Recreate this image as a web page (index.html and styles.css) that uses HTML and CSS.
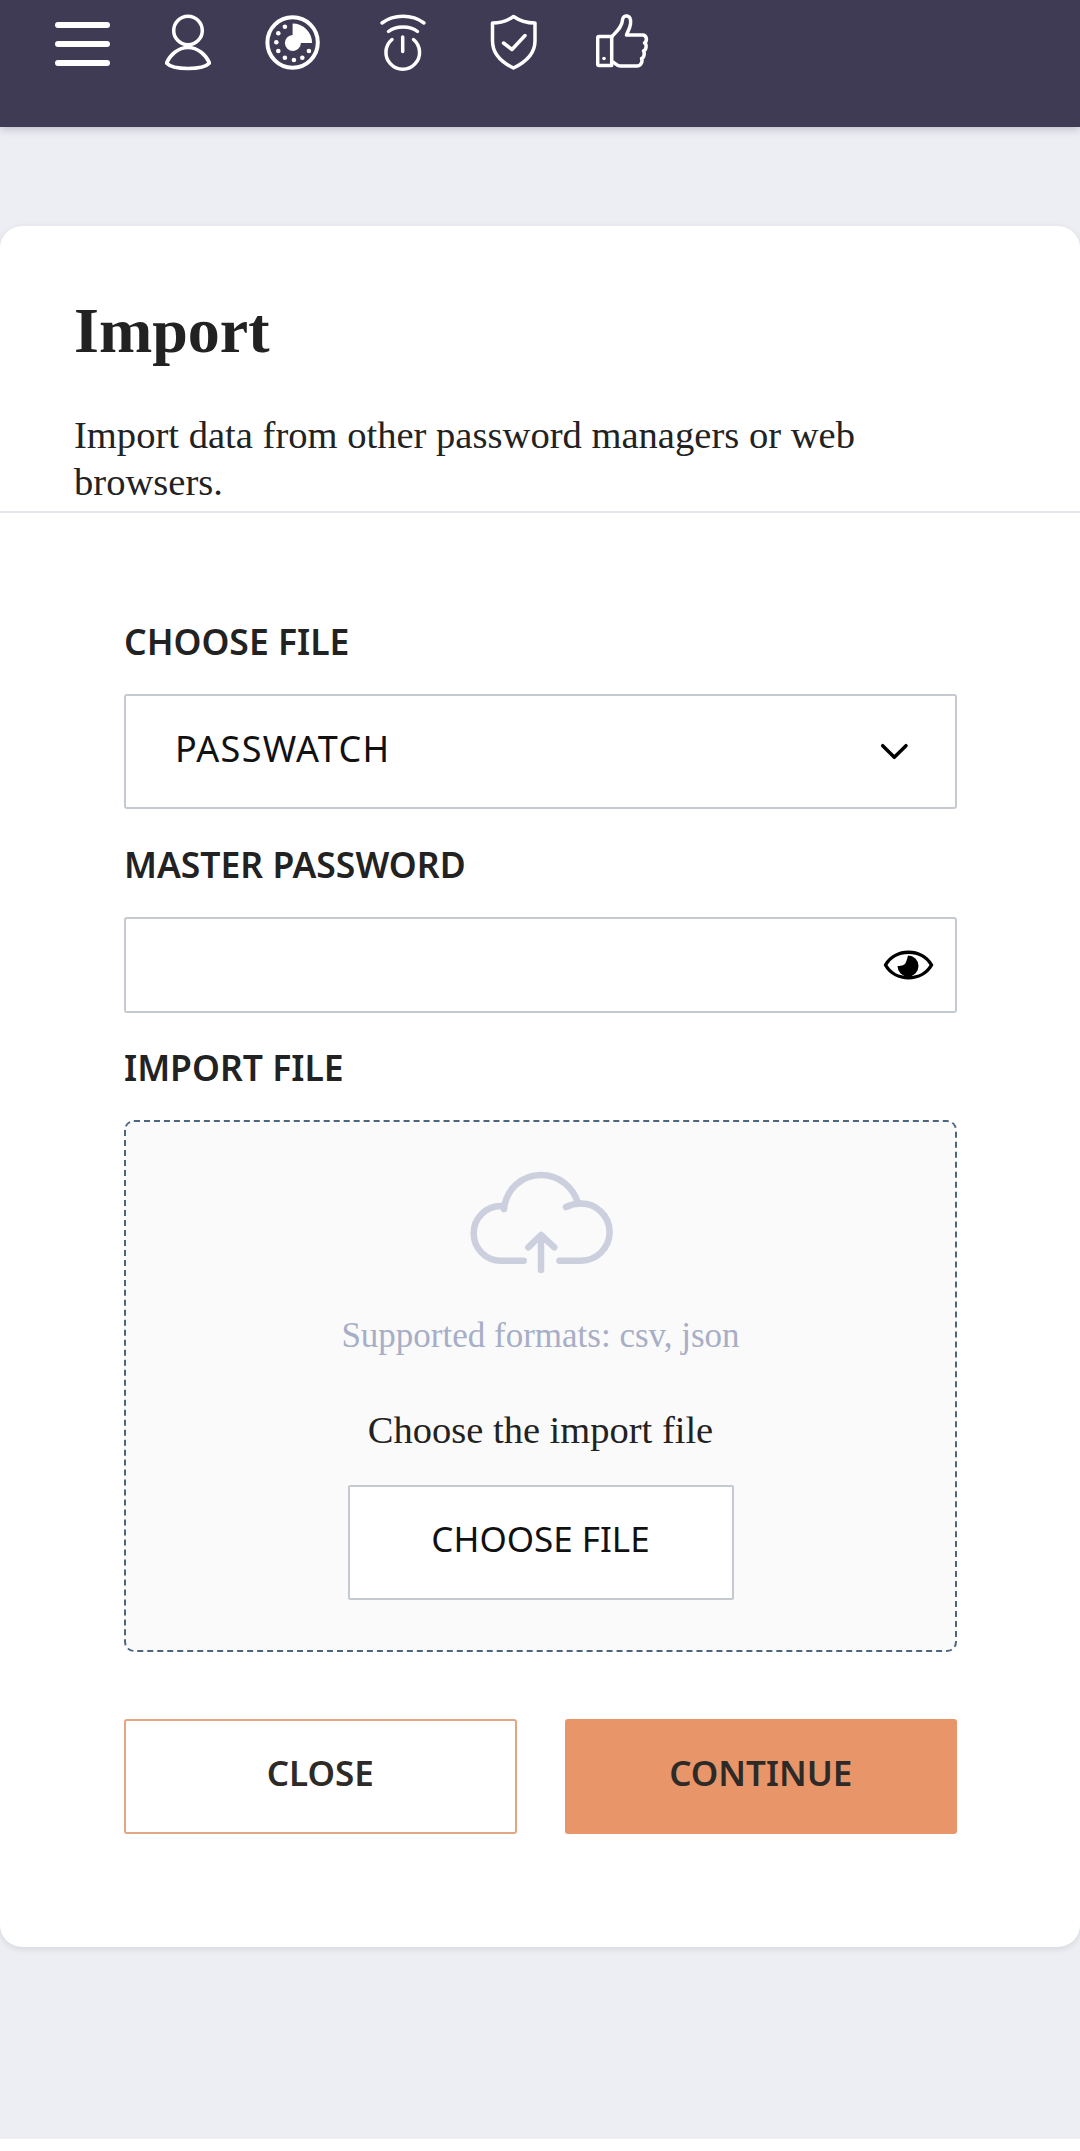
FILE: index.html
```html
<!DOCTYPE html>
<html lang="en">
<head>
<meta charset="utf-8">
<title>Import</title>
<link rel="stylesheet" href="styles.css">
</head>
<body>
<div class="page">
  <header class="topbar">
    <svg class="ico w-menu" viewBox="55 12 55 60"><path class="s6" d="M58 25H107M58 44H107M58 63H107"/></svg>
    <svg class="ico w-user" viewBox="165 12 46 60"><circle class="s3" cx="188" cy="30.500" r="14.300"/><path class="s3" d="M188 47.500C178 47.500 170 55 166.500 63C170 67 180 68.500 188 68.500C196 68.500 206 67 209.500 63C206 55 198 47.500 188 47.500Z"/></svg>
    <svg class="ico w-dial" viewBox="263.400 12 56 60"><circle class="s4" cx="292" cy="42.500" r="25.200"/><path class="fill" d="M292 23.500A19.500 19.500 0 0 1 311.500 43H300.300A8 8 0 1 1 292 35Z"/><g class="fill"><circle cx="284.300" cy="26.700" r="2.300"/><circle cx="277.700" cy="33.300" r="2.300"/><circle cx="275.700" cy="42.300" r="2.300"/><circle cx="277.700" cy="51" r="2.300"/><circle cx="284.300" cy="57.700" r="2.300"/><circle cx="293.300" cy="60" r="2.300"/><circle cx="301.700" cy="57.700" r="2.300"/><circle cx="308.300" cy="51" r="2.300"/></g></svg>
    <svg class="ico w-power" viewBox="375 12 56 60"><path class="s3" d="M382 23C394 14 412 14 424 23M388.500 31.500C396 25.500 410 25.500 417.500 31.500M392 39.500A16.800 16.800 0 1 0 413.500 39.500M402.700 37V51.500"/></svg>
    <svg class="ico w-shield" viewBox="486 12 55 60"><path class="s3" d="M513.500 16.500C507 21 500 23 492.500 23V41C492.500 53 501 62 513.500 68C526 62 535 53 535 41V23C527 23 520 21 513.500 16.500Z"/><path class="s3" d="M503.500 43L512 49.500L525 35.500"/></svg>
    <svg class="ico w-thumb" viewBox="596 12 53 60"><path class="s3" d="M599 36.500H611.700V65.500H599Q597.700 65.500 597.700 64.200V37.800Q597.700 36.500 599 36.500Z"/><path class="s3" d="M612 36.500C617 31 622 27 622.500 20C623 14 632 14 630.500 24C630 28 628 31 626.500 35H642.500C647 35 647.500 41 644.500 43C647 44 646.500 50 643.500 51C645 53 644 58 641.500 58.500C643 61 641 66 637 66H620C616 66 615 62 612 62"/><circle class="fill" cx="604" cy="58.500" r="1.800"/></svg>
  </header>

  <main class="content">
    <section class="card">
      <div class="card-head">
        <h1 class="title">Import</h1>
        <p class="desc">Import data from other password managers or web browsers.</p>
      </div>
      <form class="form">
        <div class="field">
          <label class="label">CHOOSE FILE</label>
          <div class="box select-box">
            <span class="select-text">PASSWATCH</span>
            <svg class="chevron" viewBox="878 742 30 20"><path class="s3 dark" d="M881.700 745.700L893.300 757.300L905 745.700"/></svg>
          </div>
        </div>
        <div class="field field-tight">
          <label class="label">MASTER PASSWORD</label>
          <div class="box input-box">
            <svg class="eye" viewBox="882 945 53 36"><path class="s3 dark" d="M885.500 963C895 946 922 946 931.500 963C922 980 895 980 885.500 963Z"/><path class="fill-dark" fill-rule="evenodd" d="M908 953.500A10.500 10.500 0 1 1 897.500 964C902 964 905 963 906 960C907 957.500 907.500 955.500 908 953.500Z"/></svg>
          </div>
        </div>
        <div class="field field-last">
          <label class="label">IMPORT FILE</label>
          <div class="drop">
            <svg class="cloud" viewBox="465 1168 150 109"><path class="s7 cloud-line" d="M503 1209C505 1190 520 1175 540 1175C558 1175 572 1187 577 1203M565 1207C570 1204.500 575 1203.500 580 1203.500A20 20 0 0 1 580 1260.700H558.500M522.700 1260.700H500A20 20 0 0 1 500 1206C501 1206 502 1207 503 1209M540 1270V1236M527.300 1247.300L540 1235L553.300 1247.300"/></svg>
            <p class="formats">Supported formats: csv, json</p>
            <p class="choose">Choose the import file</p>
            <button type="button" class="file-btn">CHOOSE FILE</button>
          </div>
        </div>
        <div class="actions">
          <button type="button" class="btn btn-close">CLOSE</button>
          <button type="button" class="btn btn-go">CONTINUE</button>
        </div>
      </form>
    </section>
  </main>
</div>
</body>
</html>
```
FILE: styles.css
```css
* { box-sizing: border-box; }
html, body { margin: 0; padding: 0; background: #fff; }
body { font-family: "Liberation Serif", serif; color: #222; }
.page { height: 2139px; background: #edeef3; overflow: hidden; }
.topbar { height: 127px; background: #3f3b55; padding: 12px 0 0 55px; display: flex; gap: 55px; align-items: flex-start; box-shadow: 0 2px 8px rgba(40, 40, 70, .25); position: relative; }
.ico { height: 60px; display: block; }
.w-menu { width: 55px; }
.w-user { width: 46px; }
.w-dial { width: 56px; margin-left: -2px; }
.w-power { width: 56px; }
.w-shield { width: 55px; }
.w-thumb { width: 53px; }
.s3, .s4, .s6, .s7 { fill: none; stroke: #fff; stroke-linecap: round; stroke-linejoin: round; }
.s3 { stroke-width: 3.5; }
.s4 { stroke-width: 4; }
.s6 { stroke-width: 6; }
.s7 { stroke-width: 6.500; }
.dark { stroke: #000; }
.fill { fill: #fff; }
.fill-dark { fill: #000; }
.cloud-line { stroke: #ccd0de; }
.content { padding-top: 99px; }
.card { background: #fff; border-radius: 22px; height: 1721px; box-shadow: 0 2px 6px rgba(40, 40, 70, .12); }
.card-head { height: 287px; padding: 68px 74px 0; border-bottom: 2px solid #e4e6ec; }
.title { margin: 0; font-size: 64px; line-height: 74px; font-weight: 700; color: #222; }
.desc { margin: 44px 0 0; max-width: 820px; font-size: 38.600px; line-height: 47px; color: #222; }
.form { padding: 103px 123px 0 124px; }
.field { margin-bottom: 30px; }
.field-tight { margin-bottom: 29px; }
.field-last { margin-bottom: 67px; }
.label { display: block; font-family: "Noto Sans", sans-serif; font-weight: 600; font-size: 35.500px; line-height: 50px; margin-bottom: 28px; color: #222; }
.box { border: 2px solid #c5cad0; border-radius: 3px; background: #fff; display: flex; align-items: center; justify-content: space-between; }
.select-box { height: 115px; padding: 0 46px 0 49px; }
.input-box { height: 96px; padding: 0 20px 0 50px; justify-content: flex-end; }
.select-text { font-family: "Noto Sans", sans-serif; font-size: 36px; letter-spacing: 1.300px; color: #111; margin-top: -6px; }
.chevron { width: 30px; height: 20px; }
.eye { width: 53px; height: 36px; }
.drop { height: 532px; border: 2px dashed #4d667f; border-radius: 10px; background: #fafafb; display: flex; flex-direction: column; align-items: center; padding-top: 46px; }
.cloud { width: 150px; height: 109px; }
.formats { margin: 37px 0 0; font-size: 35px; line-height: 44px; color: #a7aec6; }
.choose { margin: 50px 0 0; font-size: 38.500px; line-height: 44px; color: #222; }
.file-btn { margin-top: 33px; width: 386px; height: 115px; border: 2px solid #c5cad0; border-radius: 2px; background: #fff; font-family: "Noto Sans", sans-serif; font-size: 35px; color: #111; padding: 0 0 8px; }
.actions { display: grid; grid-template-columns: 1fr 1fr; gap: 48px; }
.btn { height: 115px; border-radius: 3px; font-family: "Noto Sans", sans-serif; font-weight: 600; font-size: 35px; color: #2d2a28; padding: 0 0 8px; }
.btn-close { background: #fff; border: 2px solid #e3a684; }
.btn-go { background: #e8956a; border: none; }
```
